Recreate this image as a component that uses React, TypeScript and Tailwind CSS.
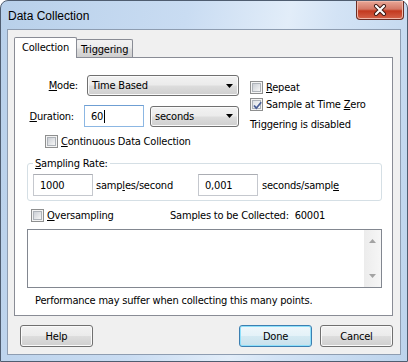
import React from "react";

const ui =
  "font-['DejaVu_Sans_Condensed','DejaVu_Sans',sans-serif] text-[11px] leading-[13px] tracking-[-0.2px] text-black";
const btnBg =
  "bg-[linear-gradient(#f2f2f2,#ebebeb_48%,#dddddd_52%,#cfcfcf)] shadow-[inset_0_0_0_1px_#fafafa]";

function Check({ checked = false }: { checked?: boolean }) {
  return (
    <span className="relative flex h-[13px] w-[13px] shrink-0 items-center justify-center border border-[#8e8f8f] bg-[#f4f4f4]">
      <span
        className={`h-[9px] w-[9px] border border-[#aeb3b9] ${
          checked
            ? "bg-[linear-gradient(135deg,#dfe2e6,#fbfbfb)]"
            : "bg-[linear-gradient(135deg,#cbcfd5,#f6f6f6)]"
        }`}
      />
      {checked && (
        <svg className="absolute left-[1px] top-[1px]" width="11" height="11" viewBox="0 0 11 11">
          <path d="M2 5.5L4.3 8.2L9.2 2.2" fill="none" stroke="#4a5f97" strokeWidth="1.8" />
        </svg>
      )}
    </span>
  );
}

function Combo({ value, w }: { value: string; w: string }) {
  return (
    <div
      className={`flex h-[21px] ${w} items-center justify-between rounded-[3px] border border-[#707070] ${btnBg} pl-[4px] pr-[5px]`}
    >
      <span>{value}</span>
      <svg width="7" height="4" viewBox="0 0 7 4">
        <path d="M0 0H7L3.5 4Z" fill="#000" />
      </svg>
    </div>
  );
}

function Field({ value, w, focused = false }: { value: string; w: string; focused?: boolean }) {
  return (
    <div
      className={`flex h-[22px] ${w} items-center border bg-white pl-[6px] ${
        focused ? "border-[#8cb7e3] border-t-[#6f9fd3]" : "border-[#c5c8ce] border-t-[#abadb3]"
      }`}
    >
      <span>{value}</span>
      {focused && <span className="ml-[1px] h-[13px] w-[1px] bg-black" />}
    </div>
  );
}

function Button({ label, main = false }: { label: string; main?: boolean }) {
  return (
    <div
      className={`flex h-[22px] w-[73px] items-center justify-center rounded-[3px] border ${
        main
          ? "border-[#3c7fb1] bg-[linear-gradient(#eef7fb,#e4f2f8_48%,#d3e9f2_52%,#c8e1ec)] shadow-[inset_0_0_0_1px_#8ee0fb]"
          : `border-[#707070] ${btnBg}`
      }`}
    >
      {label}
    </div>
  );
}

function CheckRow({ checked, children }: { checked?: boolean; children: React.ReactNode }) {
  return (
    <div className="flex h-[13px] items-center gap-[3px]">
      <Check checked={checked} />
      <span>{children}</span>
    </div>
  );
}

export default function App() {
  return (
    <div
      className={`${ui} flex h-[362px] w-[408px] flex-col rounded-t-[8px] border border-[#4f5d70] bg-[linear-gradient(100deg,#b8d0ea_0%,#c9dcf2_40%,#e2edf9_62%,#d3e3f5_72%,#bcd3ec_100%)]`}
    >
      {/* title bar */}
      <div className="flex h-[28px] items-start justify-between">
        <span className="mt-[8px] pl-[7px] font-['Liberation_Sans',sans-serif] text-[12px] leading-[14px] tracking-normal">
          Data Collection
        </span>
        <div className="mr-[3px] flex h-[19px] w-[48px] items-center justify-center rounded-b-[4px] border border-t-0 border-[#6a2d25] bg-[linear-gradient(#e9a797,#d47866_45%,#c3391f_55%,#d4634a)] shadow-[inset_0_0_0_1px_#f0b8aa]">
          <svg width="14" height="12" viewBox="0 0 14 12">
            <path d="M3 2L11 10M11 2L3 10" stroke="#3a1712" strokeWidth="4" strokeLinecap="round" />
            <path d="M3 2L11 10M11 2L3 10" stroke="#fff" strokeWidth="2.2" strokeLinecap="round" />
          </svg>
        </div>
      </div>

      {/* client area */}
      <div className="ml-[6px] flex h-[326px] w-[394px] flex-col border border-[#8e9db1] bg-[#f0f0f0] pl-[6px] pr-[7px] pt-[7px]">
        {/* tabs */}
        <div className="flex h-[20px] items-end">
          <div className="relative z-10 mb-[-1px] flex h-[21px] w-[63px] items-start rounded-t-[2px] border border-b-0 border-[#898c95] bg-white pl-[7px] pt-[3px]">
            Collection
          </div>
          <div className="ml-[-1px] flex h-[18px] w-[57px] items-start rounded-t-[2px] border border-b-0 border-[#898c95] bg-[linear-gradient(#f2f2f2,#ebebeb_48%,#dddddd_52%,#cfcfcf)] pl-[4px] pt-[3px]">
            Triggering
          </div>
        </div>

        {/* tab panel */}
        <div className="flex h-[259px] w-[379px] flex-col border border-[#898c95] bg-white">
          <div className="flex">
            <div className="flex w-[224px] flex-col pt-[17px]">
              <div className="flex items-center">
                <span className="w-[63px] text-right">
                  <u>M</u>ode:
                </span>
                <div className="ml-[9px]">
                  <Combo value="Time Based" w="w-[152px]" />
                </div>
              </div>
              <div className="mt-[9px] flex items-center">
                <span className="w-[59px] text-right">
                  <u>D</u>uration:
                </span>
                <div className="ml-[10px]">
                  <Field value="60" w="w-[60px]" focused />
                </div>
                <div className="ml-[6px]">
                  <Combo value="seconds" w="w-[89px]" />
                </div>
              </div>
              <div className="ml-[30px] mt-[8px]">
                <CheckRow>
                  <u>C</u>ontinuous Data Collection
                </CheckRow>
              </div>
            </div>
            <div className="ml-[11px] flex flex-col pt-[23px]">
              <CheckRow>
                <u>R</u>epeat
              </CheckRow>
              <div className="mt-[4px]">
                <CheckRow checked>
                  Sample at Time <u>Z</u>ero
                </CheckRow>
              </div>
              <span className="mt-[7px]">Triggering is disabled</span>
            </div>
          </div>

          {/* sampling rate */}
          <fieldset className="ml-[12px] mt-[9px] w-[355px] rounded-[3px] border border-[#d5dfe5] px-[5px] pb-[4px] pt-[4px]">
            <legend className="px-[2px]">
              <u>S</u>ampling Rate:
            </legend>
            <div className="flex items-center">
              <div className="flex w-[165px] items-center gap-[3px]">
                <Field value="1000" w="w-[60px]" />
                <span>
                  samp<u>l</u>es/second
                </span>
              </div>
              <div className="flex items-center gap-[4px]">
                <Field value="0,001" w="w-[60px]" />
                <span>
                  seconds/sampl<u>e</u>
                </span>
              </div>
            </div>
          </fieldset>

          <div className="ml-[16px] mt-[8px] flex items-center">
            <div className="w-[139px]">
              <CheckRow>
                <u>O</u>versampling
              </CheckRow>
            </div>
            <span className="whitespace-pre">Samples to be Collected:  60001</span>
          </div>

          {/* list */}
          <div className="ml-[12px] mt-[7px] flex h-[59px] w-[355px] justify-end border border-[#828790] bg-white">
            <div className="flex w-[17px] flex-col items-center justify-between bg-[linear-gradient(90deg,#ececec,#f6f6f6)] py-[9px]">
              <svg width="7" height="4" viewBox="0 0 7 4">
                <path d="M0 4H7L3.5 0Z" fill="#a3a3a3" />
              </svg>
              <svg width="7" height="4" viewBox="0 0 7 4">
                <path d="M0 0H7L3.5 4Z" fill="#a3a3a3" />
              </svg>
            </div>
          </div>

          <span className="ml-[20px] mt-[6px]">
            Performance may suffer when collecting this many points.
          </span>
        </div>

        {/* buttons */}
        <div className="mt-[9px] flex items-center">
          <div className="ml-[6px]">
            <Button label="Help" />
          </div>
          <div className="ml-auto flex gap-[8px]">
            <Button label="Done" main />
            <Button label="Cancel" />
          </div>
        </div>
      </div>
    </div>
  );
}
